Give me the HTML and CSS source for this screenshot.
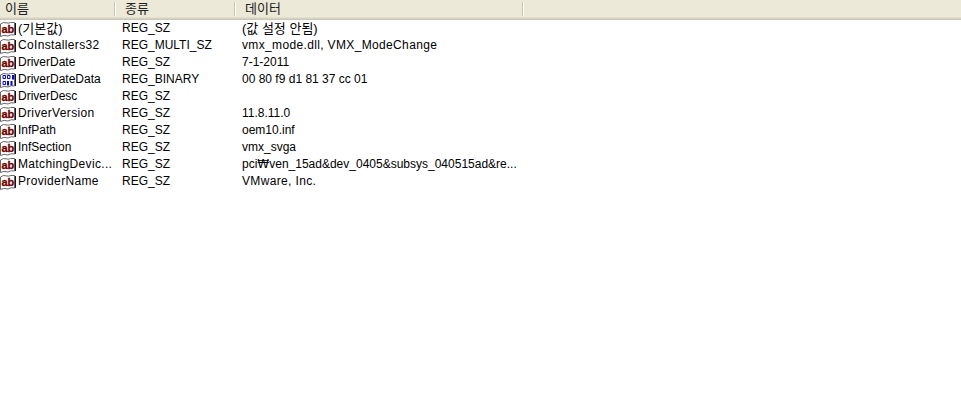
FILE: index.html
```html
<!DOCTYPE html>
<html lang="ko">
<head>
    <meta charset="UTF-8">
    <meta name="viewport" content="width=device-width, initial-scale=1.0">
    <title>레지스트리 편집기</title>
    <link rel="stylesheet" href="styles.css">
</head>
<body>
    <svg class="defs" width="0" height="0">
        <defs>
            <g id="page">
                <path d="M0.500 3 Q3 0.500 7 2 Q9 2.500 10.500 1.500 L14.500 1.500 L14.500 14 Q11 13 8 15 Q4 13.500 0.500 15.500 Z" fill="#fff" stroke="#666" stroke-width="1"/>
                <path d="M15.500 2 V14" stroke="#111" stroke-width="1"/>
            </g>
            <g id="icon-sz">
                <use href="#page"/>
                <text x="1.500" y="11.500" class="ab">ab</text>
            </g>
            <g id="icon-bin">
                <use href="#page"/>
                <path d="M3 3.500h2.500v3h-2.500z M7.500 3.500h2.500v3h-2.500z M3 9.500h2.500v3h-2.500z" fill="none" stroke="#0000e0"/>
                <path d="M12 3h2v4.500h-2z M7 9h2v4.500h-2z M10.500 9h2v4.500h-2z" fill="#0000e0"/>
            </g>
        </defs>
    </svg>

    <div class="list">
        <div class="head">
            <div class="col">이름</div>
            <div class="col">종류</div>
            <div class="col">데이터</div>
            <div class="col"></div>
        </div>
        <div class="row">
            <div class="name"><svg class="icon" width="16" height="16"><use href="#icon-sz"/></svg><span class="ko">(기본값)</span></div>
            <div class="type">REG_SZ</div>
            <div class="data ko">(값 설정 안됨)</div>
        </div>
        <div class="row">
            <div class="name"><svg class="icon" width="16" height="16"><use href="#icon-sz"/></svg><span class="wide">CoInstallers32</span></div>
            <div class="type">REG_MULTI_SZ</div>
            <div class="data wide">vmx_mode.dll, VMX_ModeChange</div>
        </div>
        <div class="row">
            <div class="name"><svg class="icon" width="16" height="16"><use href="#icon-sz"/></svg>DriverDate</div>
            <div class="type">REG_SZ</div>
            <div class="data">7-1-2011</div>
        </div>
        <div class="row">
            <div class="name"><svg class="icon" width="16" height="16"><use href="#icon-bin"/></svg>DriverDateData</div>
            <div class="type">REG_BINARY</div>
            <div class="data">00 80 f9 d1 81 37 cc 01</div>
        </div>
        <div class="row">
            <div class="name"><svg class="icon" width="16" height="16"><use href="#icon-sz"/></svg>DriverDesc</div>
            <div class="type">REG_SZ</div>
            <div class="data"></div>
        </div>
        <div class="row">
            <div class="name"><svg class="icon" width="16" height="16"><use href="#icon-sz"/></svg><span class="wide">DriverVersion</span></div>
            <div class="type">REG_SZ</div>
            <div class="data">11.8.11.0</div>
        </div>
        <div class="row">
            <div class="name"><svg class="icon" width="16" height="16"><use href="#icon-sz"/></svg>InfPath</div>
            <div class="type">REG_SZ</div>
            <div class="data">oem10.inf</div>
        </div>
        <div class="row">
            <div class="name"><svg class="icon" width="16" height="16"><use href="#icon-sz"/></svg>InfSection</div>
            <div class="type">REG_SZ</div>
            <div class="data">vmx_svga</div>
        </div>
        <div class="row">
            <div class="name"><svg class="icon" width="16" height="16"><use href="#icon-sz"/></svg><span class="wide">MatchingDevic...</span></div>
            <div class="type">REG_SZ</div>
            <div class="data">pci<span class="won">₩</span>ven_15ad&amp;dev_0405&amp;subsys_040515ad&amp;re...</div>
        </div>
        <div class="row">
            <div class="name"><svg class="icon" width="16" height="16"><use href="#icon-sz"/></svg><span class="wide">ProviderName</span></div>
            <div class="type">REG_SZ</div>
            <div class="data wide">VMware, Inc.</div>
        </div>
    </div>
</body>
</html>
```

FILE: styles.css
```css
html, body {
    height: 100%;
}
body {
    margin: 0;
    background-color: #ffffff;
    color: #000000;
    font-family: "Liberation Sans", "Noto Sans CJK KR", sans-serif;
    font-size: 12px;
    overflow: hidden;
}
.defs {
    display: block;
    height: 0;
}
.head {
    display: grid;
    grid-template-columns: 115px 120px 288px 1fr;
    height: 17px;
    background-color: #ece9d8;
    border-bottom: 1px solid #e2dfcc;
    box-shadow: 0 1px 0 #d6d2c0, 0 2px 0 #cbc7b8;
    margin-bottom: 2px;
}
.col {
    box-sizing: border-box;
    height: 14px;
    margin-top: 2px;
    padding-left: 5px;
    font-size: 13px;
    line-height: 14px;
    color: #222222;
    border-right: 1px solid #c7c5b2;
    box-shadow: 1px 0 0 #ffffff;
}
.col:nth-child(n+2) {
    padding-left: 10px;
}
.col:last-child {
    border-right: 0;
    box-shadow: none;
}
.row {
    display: grid;
    grid-template-columns: 122px 120px 1fr;
    height: 17px;
    line-height: 17px;
    white-space: nowrap;
}
.name {
    display: flex;
    align-items: center;
    gap: 2px;
}
.icon {
    flex: none;
}
.ko {
    font-size: 13px;
}
.wide {
    letter-spacing: 0.35px;
}
.won {
    font-family: "DejaVu Sans", sans-serif;
    font-size: 12px;
}
.ab {
    font-family: "Liberation Sans", sans-serif;
    font-size: 11px;
    font-weight: bold;
    fill: #700000;
    stroke: #700000;
    stroke-width: 0.3;
}
```
